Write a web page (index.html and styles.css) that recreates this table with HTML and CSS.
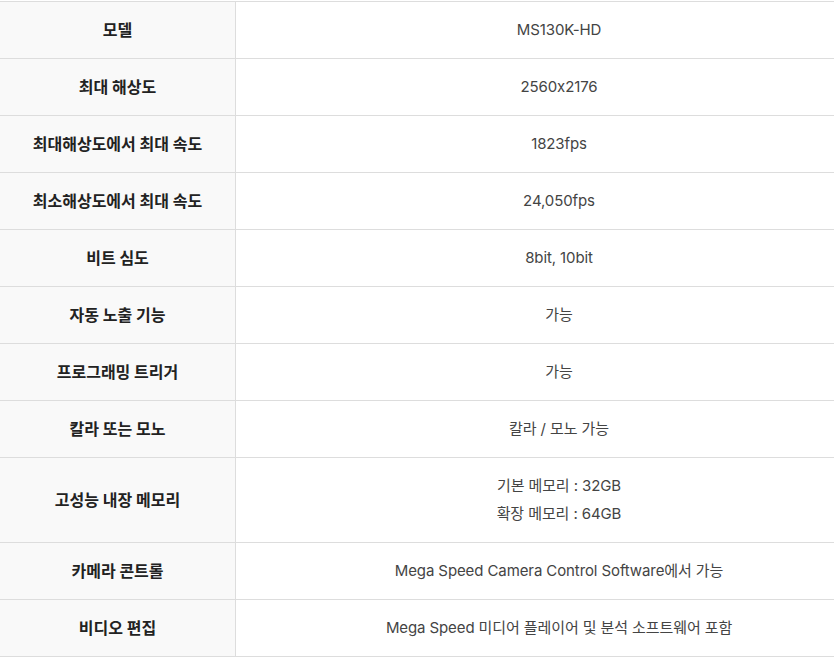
FILE: index.html
```html
<!DOCTYPE html>
<html lang="ko">
<head>
<meta charset="utf-8">
<link rel="stylesheet" href="styles.css">
</head>
<body>
<div class="wrap">
<table class="spec">
<tbody>
<tr><th>모델</th><td>MS130K-HD</td></tr>
<tr><th>최대 해상도</th><td>2560x2176</td></tr>
<tr><th>최대해상도에서 최대 속도</th><td>1823fps</td></tr>
<tr><th>최소해상도에서 최대 속도</th><td>24,050fps</td></tr>
<tr><th>비트 심도</th><td>8bit, 10bit</td></tr>
<tr><th>자동 노출 기능</th><td>가능</td></tr>
<tr><th>프로그래밍 트리거</th><td>가능</td></tr>
<tr><th>칼라 또는 모노</th><td>칼라 / 모노 가능</td></tr>
<tr><th>고성능 내장 메모리</th><td>기본 메모리 : 32GB<br>확장 메모리 : 64GB</td></tr>
<tr><th>카메라 콘트롤</th><td>Mega Speed Camera Control Software에서 가능</td></tr>
<tr><th>비디오 편집</th><td>Mega Speed 미디어 플레이어 및 분석 소프트웨어 포함</td></tr>
</tbody>
</table>
</div>
</body>
</html>
```
FILE: styles.css
```css
html, body {
  margin: 0;
  padding: 0;
  background: #fff;
}
.wrap {
  padding-top: 1px;
}
.spec {
  width: 100%;
  border-collapse: collapse;
  font-family: Inter, "Noto Sans CJK KR", sans-serif;
  font-feature-settings: "calt" 0;
  line-height: 28px;
}
.spec th,
.spec td {
  border: 1px solid #dddddd;
  text-align: center;
  vertical-align: middle;
}
.spec tr > :first-child {
  border-left: none;
}
.spec tr > :last-child {
  border-right: none;
}
.spec th {
  width: 215px;
  padding: 14px 10px;
  background: #f9f9f9;
  color: #222;
  font-size: 16px;
  font-weight: 700;
}
.spec td {
  padding: 14px 10px 14px 58px;
  color: #444;
  font-size: 15px;
  font-weight: 400;
  letter-spacing: -0.1px;
}
```
